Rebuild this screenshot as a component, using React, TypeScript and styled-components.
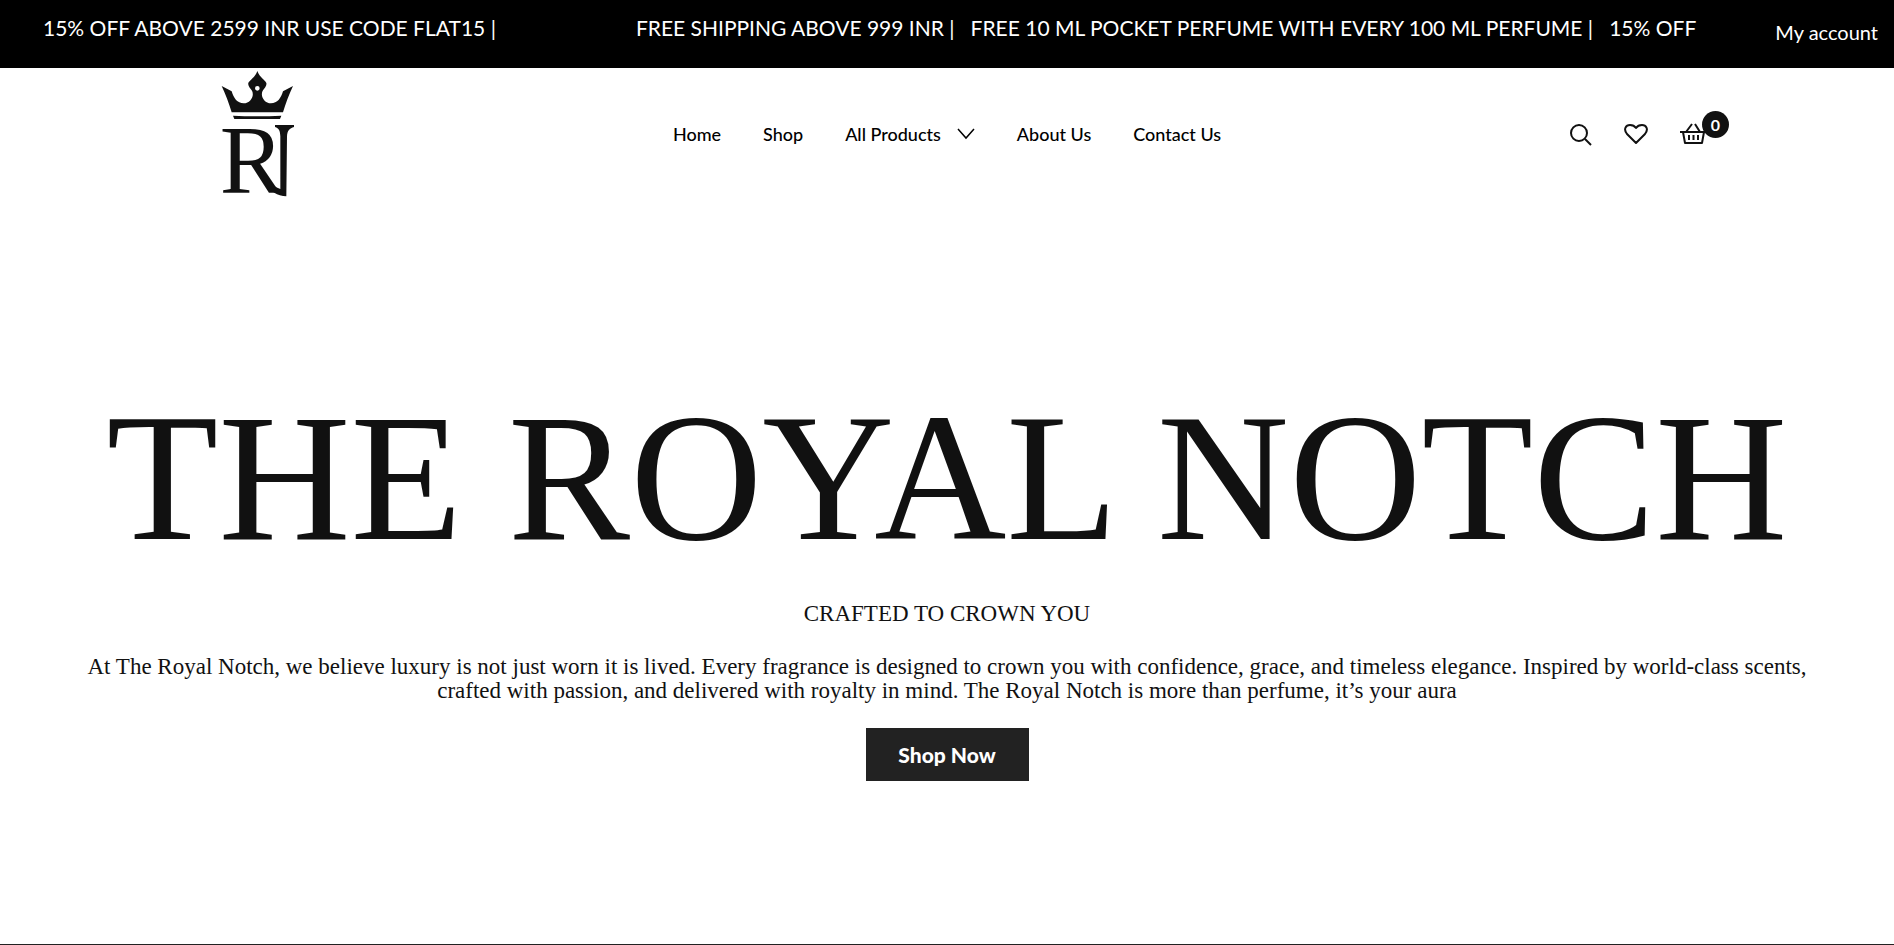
import React from "react";
import styled, { createGlobalStyle } from "styled-components";

const GlobalStyle = createGlobalStyle`
  *, *::before, *::after { box-sizing: border-box; }
  body {
    margin: 0;
    background: #fff;
    color: #111;
    font-family: Lato, "Liberation Sans", sans-serif;
  }
  a { color: inherit; text-decoration: none; }
  ul, h1, h2, p { margin: 0; padding: 0; }
  ul { list-style: none; }
`;

const Page = styled.div`
  display: flex;
  flex-direction: column;
  min-height: 100vh;
`;

const TopBar = styled.div`
  display: flex;
  align-items: center;
  justify-content: space-between;
  height: 68px;
  padding: 0 16px 4px 43px;
  background: #000;
  color: #fff;
`;

const Ticker = styled.div`
  flex: 1;
  min-width: 0;
  padding-bottom: 8px;
  display: flex;
  gap: 140px;
  overflow: hidden;
  white-space: nowrap;
`;

const TickerGroup = styled.div`
  display: flex;
  flex: none;
  gap: 16px;
  font-size: 21px;
  line-height: 28px;
`;

const AccountLink = styled.a`
  font-size: 20px;
  line-height: 28px;
  white-space: nowrap;
`;

const Header = styled.header`
  display: grid;
  grid-template-columns: 1fr auto 1fr;
  align-items: center;
  height: 132px;
  padding: 0 187px;
`;

const LogoLink = styled.a`
  display: block;
  justify-self: start;
  margin: 0 0 -16px 32px;
  svg { display: block; }
`;

const NavList = styled.ul`
  display: flex;
  align-items: center;
  gap: 42px;
  font-size: 18px;
  font-weight: 500;
  line-height: 24px;
  color: #000;
`;

const NavLink = styled.a`
  display: flex;
  align-items: center;
  gap: 16px;
`;

const Tools = styled.div`
  display: flex;
  align-items: center;
  justify-self: end;
  gap: 32px;
`;

const ToolButton = styled.button`
  position: relative;
  display: flex;
  padding: 0;
  border: 0;
  background: none;
  color: #111;
  cursor: pointer;
`;

const CartBadge = styled.span`
  position: absolute;
  left: 22px;
  top: -12px;
  display: flex;
  align-items: center;
  justify-content: center;
  width: 27px;
  height: 27px;
  border-radius: 50%;
  background: #111;
  color: #fff;
  font: 700 16px/20px Lato, sans-serif;
`;

const Hero = styled.main`
  flex: 1;
  display: flex;
  flex-direction: column;
  align-items: center;
  padding: 168px 80px 64px;
  border-bottom: 1px solid #222;
  font-family: "Liberation Serif", serif;
  text-align: center;
`;

const Title = styled.h1`
  font-size: 183px;
  font-weight: 400;
  line-height: 220px;
  white-space: nowrap;
`;

const Subtitle = styled.h2`
  margin-top: 10px;
  font-size: 23px;
  font-weight: 400;
  line-height: 32px;
`;

const Intro = styled.p`
  margin-top: 25px;
  font-size: 23px;
  line-height: 24px;
`;

const ShopButton = styled.button`
  margin-top: 25px;
  width: 163px;
  height: 53px;
  border: 0;
  background: #222;
  color: #fff;
  font: 900 21px/28px Lato, sans-serif;
  cursor: pointer;
`;

const Logo = () => (
  <svg width="76" height="146" viewBox="0 0 228 438" fill="#111" role="img" aria-label="The Royal Notch">
    <path
      fillRule="evenodd"
      d="M8 51 L38 67 C44 88 55 103 74 103 C95 103 108 79 98 64 C93 56 86 50 88 42 C92 32 108 26 115 6 C122 26 138 32 142 42 C144 50 137 56 132 64 C122 79 135 103 156 103 C175 103 186 88 192 67 L222 51 C210 76 200 104 192 130 L38 130 C30 104 20 76 8 51 Z M115 51 A7 7 0 1 0 115 65 A7 7 0 1 0 115 51 Z"
    />
    <path d="M42 140 Q115 144 187 140 L183 150 H46 Z" />
    <text x="2" y="372" fontSize="290" fontFamily="Liberation Serif, serif">R</text>
    <path d="M168 168 H225 V174 C212 178 205 184 204 202 L202 382 C175 382 155 368 135 340 L118 300 C140 332 160 352 184 360 V202 C183 184 180 178 168 174 Z" />
  </svg>
);

const SearchIcon = () => (
  <svg width="23" height="23" viewBox="0 0 23 23" fill="none" stroke="currentColor" strokeWidth="2">
    <circle cx="10" cy="10" r="8" />
    <path d="M16 16 L22 22" />
  </svg>
);

const HeartIcon = () => (
  <svg width="24" height="22" viewBox="0 0 24 22" fill="none" stroke="currentColor" strokeWidth="2" strokeLinejoin="round">
    <path d="M12 20 L3 11 C-1 6 2 2 6 2 C8 2 10 2 12 5 C14 2 16 2 18 2 C22 2 25 6 21 11 Z" />
  </svg>
);

const BasketIcon = () => (
  <svg width="27" height="22" viewBox="0 0 27 22" fill="none" stroke="currentColor" strokeWidth="2">
    <path d="M0 9 H26 M3 9 L5 20 H22 L24 9 M6 9 L12 1 M20 9 L15 1" strokeLinejoin="round" />
    <path d="M9 12 V17 M13.500 12 V17 M18 12 V17" />
  </svg>
);

const ChevronIcon = () => (
  <svg width="18" height="12" viewBox="0 0 18 12" fill="none" stroke="currentColor" strokeWidth="1.500">
    <path d="M1 1 L9 10 L17 1" />
  </svg>
);

export default function App() {
  return (
    <Page>
      <GlobalStyle />
      <TopBar>
        <Ticker>
          <TickerGroup>
            <span>15% OFF ABOVE 2599 INR USE CODE FLAT15 |</span>
          </TickerGroup>
          <TickerGroup>
            <span>FREE SHIPPING ABOVE 999 INR |</span>
            <span>FREE 10 ML POCKET PERFUME WITH EVERY 100 ML PERFUME |</span>
            <span>15% OFF</span>
          </TickerGroup>
        </Ticker>
        <AccountLink href="#account">My account</AccountLink>
      </TopBar>
      <Header>
        <LogoLink href="#home">
          <Logo />
        </LogoLink>
        <nav aria-label="Main">
          <NavList>
            <li><NavLink href="#home">Home</NavLink></li>
            <li><NavLink href="#shop">Shop</NavLink></li>
            <li><NavLink href="#products">All Products <ChevronIcon /></NavLink></li>
            <li><NavLink href="#about">About Us</NavLink></li>
            <li><NavLink href="#contact">Contact Us</NavLink></li>
          </NavList>
        </nav>
        <Tools>
          <ToolButton type="button" aria-label="Search"><SearchIcon /></ToolButton>
          <ToolButton type="button" aria-label="Wishlist"><HeartIcon /></ToolButton>
          <ToolButton type="button" aria-label="Cart">
            <BasketIcon />
            <CartBadge>0</CartBadge>
          </ToolButton>
        </Tools>
      </Header>
      <Hero>
        <Title>THE ROYAL NOTCH</Title>
        <Subtitle>CRAFTED TO CROWN YOU</Subtitle>
        <Intro>
          At The Royal Notch, we believe luxury is not just worn it is lived. Every fragrance is designed to crown you
          with confidence, grace, and timeless elegance. Inspired by world-class scents, crafted with passion, and
          delivered with royalty in mind. The Royal Notch is more than perfume, it’s your aura
        </Intro>
        <ShopButton type="button">Shop Now</ShopButton>
      </Hero>
    </Page>
  );
}
